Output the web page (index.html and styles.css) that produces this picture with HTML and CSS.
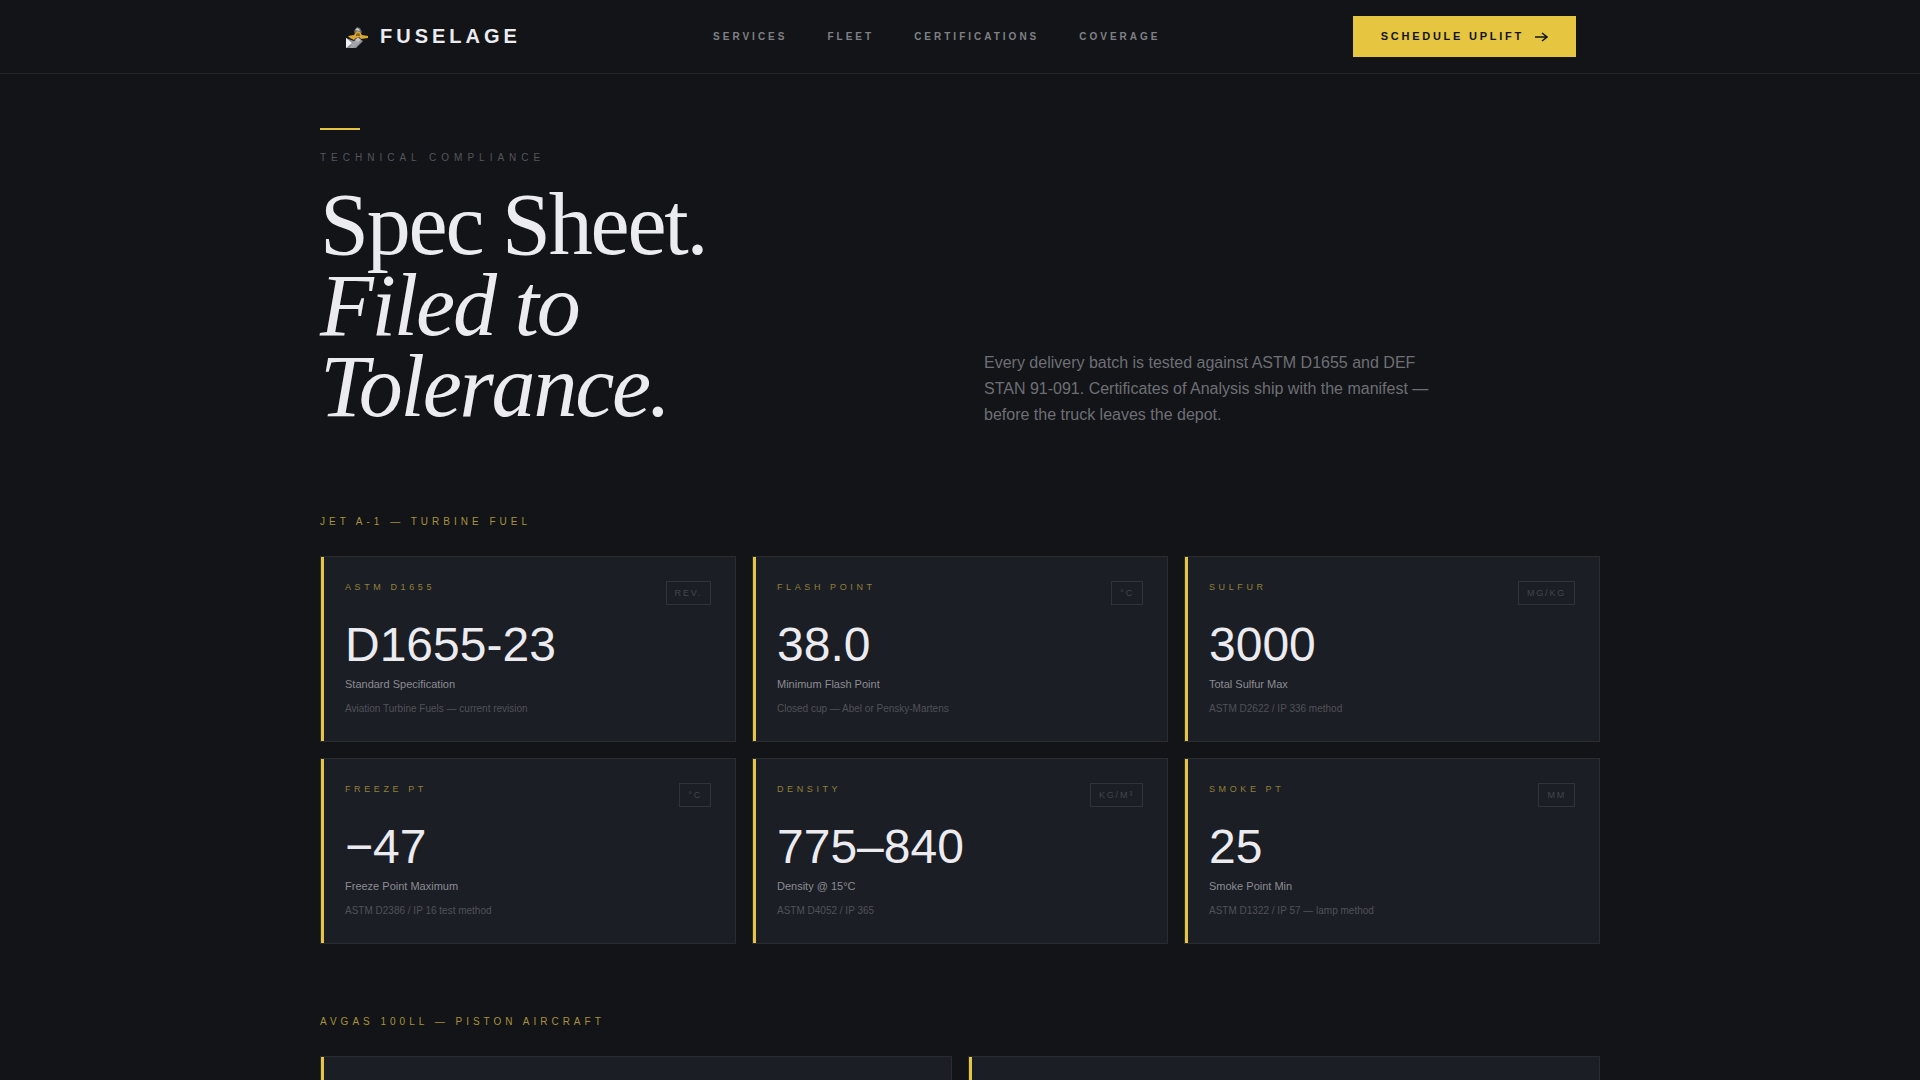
FILE: index.html
```html
<!DOCTYPE html>
<html lang="en">
<head>
  <meta charset="UTF-8" />
  <meta name="viewport" content="width=device-width, initial-scale=1.0" />
  <title>Fuselage - Spec Sheet</title>
  <link rel="stylesheet" href="styles.css">
</head>
<body>
  <header class="nav">
    <div class="nav-inner">
      <a href="#" class="logo">
        <svg class="logo-icon" viewBox="0 0 24 24" aria-hidden="true">
          <path d="M2 13l8 3 4-3 5 3-7 7H2z" fill="#8f9094"/>
          <path d="M2 13l6 5-6 5z" fill="#f1f1f1"/>
          <path d="M9 17l3-2 4 2-4 4-3 2H6z" fill="#a4a5a9"/>
          <path d="M10 6l3-4 3 1 2 4-2 3h-5z" fill="#66686e"/>
          <path d="M11 5l2-2 2 1 1 2z" fill="#c9cacd"/>
          <path d="M4 11l6-1 3-4 3 1 2 3 6 1v2l-7 1-2-2-3 1-2 2-4-2z" fill="#d9a62e"/>
          <path d="M12 9l2-1 2 1v2h-4z" fill="#8b6a1e"/>
          <path d="M11 15l3-3 3 3-3 2z" fill="#c4c5c9"/>
        </svg>
        <span>FUSELAGE</span>
      </a>
      <nav class="links">
        <a href="#services">SERVICES</a>
        <a href="#fleet">FLEET</a>
        <a href="#certifications">CERTIFICATIONS</a>
        <a href="#coverage">COVERAGE</a>
      </nav>
      <button class="btn" type="button">
        SCHEDULE UPLIFT
        <svg class="btn-icon" viewBox="0 0 14 14" aria-hidden="true">
          <path d="M1 7h12M8 3l5 4-5 4" fill="none" stroke="currentColor" stroke-width="1.5"/>
        </svg>
      </button>
    </div>
  </header>

  <main class="page">
    <section class="intro">
      <div>
        <div class="rule"></div>
        <p class="eyebrow">TECHNICAL COMPLIANCE</p>
        <h1>Spec Sheet.<br><em>Filed to<br>Tolerance.</em></h1>
      </div>
      <p class="lead">Every delivery batch is tested against ASTM D1655 and DEF STAN 91-091. Certificates of Analysis ship with the manifest — before the truck leaves the depot.</p>
    </section>

    <section class="specs">
      <h2>JET A-1 — TURBINE FUEL</h2>
      <div class="grid three">
        <article class="card">
          <div class="card-head"><span class="tag">ASTM D1655</span><span class="unit">REV.</span></div>
          <div class="value">D1655-23</div>
          <p class="label">Standard Specification</p>
          <p class="note">Aviation Turbine Fuels — current revision</p>
        </article>
        <article class="card">
          <div class="card-head"><span class="tag">FLASH POINT</span><span class="unit">°C</span></div>
          <div class="value">38.0</div>
          <p class="label">Minimum Flash Point</p>
          <p class="note">Closed cup — Abel or Pensky-Martens</p>
        </article>
        <article class="card">
          <div class="card-head"><span class="tag">SULFUR</span><span class="unit">MG/KG</span></div>
          <div class="value">3000</div>
          <p class="label">Total Sulfur Max</p>
          <p class="note">ASTM D2622 / IP 336 method</p>
        </article>
        <article class="card">
          <div class="card-head"><span class="tag">FREEZE PT</span><span class="unit">°C</span></div>
          <div class="value">−47</div>
          <p class="label">Freeze Point Maximum</p>
          <p class="note">ASTM D2386 / IP 16 test method</p>
        </article>
        <article class="card">
          <div class="card-head"><span class="tag">DENSITY</span><span class="unit">KG/M³</span></div>
          <div class="value">775–840</div>
          <p class="label">Density @ 15°C</p>
          <p class="note">ASTM D4052 / IP 365</p>
        </article>
        <article class="card">
          <div class="card-head"><span class="tag">SMOKE PT</span><span class="unit">MM</span></div>
          <div class="value">25</div>
          <p class="label">Smoke Point Min</p>
          <p class="note">ASTM D1322 / IP 57 — lamp method</p>
        </article>
      </div>
    </section>

    <section class="specs">
      <h2>AVGAS 100LL — PISTON AIRCRAFT</h2>
      <div class="grid two">
        <article class="card"></article>
        <article class="card"></article>
      </div>
    </section>
  </main>
</body>
</html>
```

FILE: styles.css
```css
* {
  box-sizing: border-box;
  margin: 0;
  padding: 0;
}

body {
  font-family: "Liberation Sans", Arial, sans-serif;
  background: #121418;
  color: #ebebf0;
}

a {
  color: inherit;
  text-decoration: none;
}

/* top bar */
.nav {
  border-bottom: 1px solid #22242a;
}

.nav-inner {
  max-width: 1280px;
  margin: 0 auto;
  padding: 16px 24px;
  display: flex;
  align-items: center;
  justify-content: space-between;
}

.logo {
  display: flex;
  align-items: center;
  gap: 12px;
  font-size: 20px;
  font-weight: bold;
  letter-spacing: 0.2em;
}

.logo-icon {
  width: 24px;
  height: 24px;
}

.links {
  display: flex;
  gap: 40px;
  font-size: 10px;
  font-weight: bold;
  letter-spacing: 0.3em;
  color: #808186;
}

.btn {
  display: flex;
  align-items: center;
  gap: 10px;
  padding: 14px 28px;
  border: none;
  background: #e6c641;
  color: #121418;
  font-family: inherit;
  font-size: 11px;
  font-weight: bold;
  line-height: 13px;
  letter-spacing: 0.25em;
  cursor: pointer;
}

.btn-icon {
  width: 14px;
  height: 14px;
  margin: -1px 0;
}

/* intro */
.page {
  max-width: 1280px;
  margin: 0 auto;
  padding-top: 54px;
}

.intro {
  display: grid;
  grid-template-columns: 1fr 1fr;
  gap: 48px;
  align-items: end;
  margin-bottom: 87px;
}

.rule {
  width: 40px;
  height: 2px;
  margin-bottom: 20px;
  background: #e6c641;
}

.eyebrow {
  margin-bottom: 18px;
  font-size: 10px;
  line-height: 16px;
  letter-spacing: 0.5em;
  color: #55565b;
}

h1 {
  font-family: "Liberation Serif", "Times New Roman", serif;
  font-size: 88px;
  font-weight: normal;
  line-height: 81px;
  letter-spacing: -0.025em;
}

.lead {
  max-width: 460px;
  margin-bottom: -1px;
  font-size: 16px;
  line-height: 26px;
  color: #6e6f74;
}

/* spec cards */
.specs {
  margin-bottom: 70px;
}

h2 {
  margin-bottom: 26px;
  font-size: 10px;
  font-weight: normal;
  line-height: 16px;
  letter-spacing: 0.4em;
  color: #a8923a;
}

.grid {
  display: grid;
  gap: 16px;
}

.three {
  grid-template-columns: repeat(3, 1fr);
}

.two {
  grid-template-columns: repeat(2, 1fr);
}

.card {
  position: relative;
  padding: 24px;
  border: 1px solid #2a2c31;
  background: #1b1e25;
}

.card::before {
  content: "";
  position: absolute;
  top: 0;
  bottom: 0;
  left: 0;
  width: 3px;
  background: #e6c641;
}

.card-head {
  display: flex;
  align-items: flex-start;
  justify-content: space-between;
  margin-bottom: 16px;
  font-size: 9px;
}

.tag {
  line-height: 12px;
  letter-spacing: 0.4em;
  color: #928038;
}

.unit {
  padding: 4px 8px;
  border: 1px solid #303339;
  line-height: 14px;
  letter-spacing: 0.2em;
  color: #43464c;
}

.value {
  font-size: 48px;
  line-height: 48px;
  margin-bottom: 6px;
}

.label {
  margin-bottom: 8px;
  font-size: 11px;
  line-height: 18px;
  color: #8b8c91;
}

.note {
  font-size: 10px;
  line-height: 16px;
  color: #505258;
}
```
